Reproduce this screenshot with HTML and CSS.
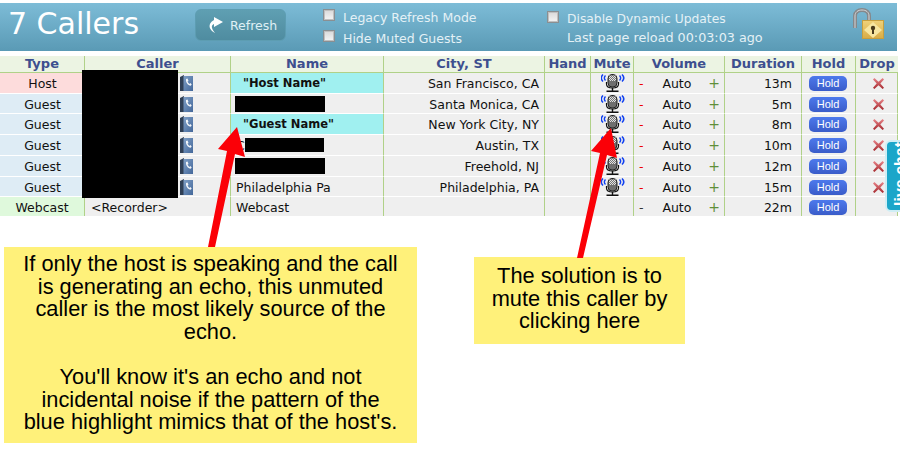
FILE: index.html
```html
<!DOCTYPE html>
<html>
<head>
<meta charset="utf-8">
<title>7 Callers</title>
<link rel="stylesheet" href="styles.css">
</head>
<body>
<div class="page">
  <header class="bar">
    <h1 class="title">7 Callers</h1>
    <div class="refresh">
      <svg class="refresh-ico" width="18" height="18" viewBox="0 0 18 18"><path d="M8 1L17 6 8 11V8C5 9 5 12 9 17 3 14 1 8 8 4Z" fill="#fff"/></svg>
      <span>Refresh</span>
    </div>
    <div class="opts">
      <label class="opt"><i class="box"></i>Legacy Refresh Mode</label>
      <label class="opt"><i class="box"></i>Hide Muted Guests</label>
    </div>
    <div class="opts opts-b">
      <label class="opt"><i class="box"></i>Disable Dynamic Updates</label>
      <div class="opt opt-plain">Last page reload 00:03:03 ago</div>
    </div>
    <svg class="lock" width="34" height="34" viewBox="0 0 34 34">
      <path d="M4 21V9c0-4 3-6 7-6s7 2 7 6v5" fill="none" stroke="#85888b" stroke-width="4"/>
      <path d="M4 21V9c0-4 3-6 7-6s7 2 7 6v5" fill="none" stroke="#d5d6d8" stroke-width="1"/>
      <rect x="11.500" y="13.500" width="21" height="18" fill="url(#lk)" stroke="#c79f3e"/>
      <path d="M22 15l9 8-9 8-9-8Z" fill="#f8e6a0"/>
      <circle cx="22" cy="21" r="2.200" fill="#4a3a1a"/><rect x="21" y="21" width="2" height="6" fill="#4a3a1a"/>
    </svg>
  </header>

  <table class="grid">
    <colgroup>
      <col class="c-type"><col class="c-caller"><col class="c-name"><col class="c-city"><col class="c-hand"><col class="c-mute"><col class="c-vol"><col class="c-dur"><col class="c-hold"><col class="c-drop">
    </colgroup>
    <thead>
      <tr><th>Type</th><th>Caller</th><th>Name</th><th>City, ST</th><th>Hand</th><th>Mute</th><th>Volume</th><th>Duration</th><th>Hold</th><th>Drop</th></tr>
    </thead>
    <tbody>
      <tr>
        <td class="type host">Host</td><td class="caller"><svg class="ph" viewBox="0 0 13 16"><use href="#phone"/></svg></td>
        <td class="name hl">"Host Name"</td><td class="city">San Francisco, CA</td><td></td>
        <td class="mute"><svg class="mic" viewBox="0 0 24 18"><use href="#mic"/></svg></td>
        <td><div class="vol"><b class="minus">-</b><span>Auto</span><b class="plus">+</b></div></td>
        <td class="dur">13m</td><td class="hold"><span class="btn">Hold</span></td><td class="drop"><svg class="x" viewBox="0 0 12 12"><use href="#x"/></svg></td>
      </tr>
      <tr class="short">
        <td class="type">Guest</td><td class="caller"><svg class="ph" viewBox="0 0 13 16"><use href="#phone"/></svg></td>
        <td class="name"><i class="black b-wide"></i></td><td class="city">Santa Monica, CA</td><td></td>
        <td class="mute"><svg class="mic" viewBox="0 0 24 18"><use href="#mic"/></svg></td>
        <td><div class="vol"><b class="minus">-</b><span>Auto</span><b class="plus">+</b></div></td>
        <td class="dur">5m</td><td class="hold"><span class="btn">Hold</span></td><td class="drop"><svg class="x" viewBox="0 0 12 12"><use href="#x"/></svg></td>
      </tr>
      <tr>
        <td class="type">Guest</td><td class="caller"><svg class="ph" viewBox="0 0 13 16"><use href="#phone"/></svg></td>
        <td class="name hl">"Guest Name"</td><td class="city">New York City, NY</td><td></td>
        <td class="mute"><svg class="mic" viewBox="0 0 24 18"><use href="#mic"/></svg></td>
        <td><div class="vol"><b class="minus">-</b><span>Auto</span><b class="plus">+</b></div></td>
        <td class="dur">8m</td><td class="hold"><span class="btn">Hold</span></td><td class="drop"><svg class="x" viewBox="0 0 12 12"><use href="#x"/></svg></td>
      </tr>
      <tr>
        <td class="type">Guest</td><td class="caller"><svg class="ph" viewBox="0 0 13 16"><use href="#phone"/></svg></td>
        <td class="name"><div class="partial">C<i class="black b-mid"></i></div></td><td class="city">Austin, TX</td><td></td>
        <td class="mute"><svg class="mic" viewBox="0 0 24 18"><use href="#mic"/></svg></td>
        <td><div class="vol"><b class="minus">-</b><span>Auto</span><b class="plus">+</b></div></td>
        <td class="dur">10m</td><td class="hold"><span class="btn">Hold</span></td><td class="drop"><svg class="x" viewBox="0 0 12 12"><use href="#x"/></svg></td>
      </tr>
      <tr>
        <td class="type">Guest</td><td class="caller"><svg class="ph" viewBox="0 0 13 16"><use href="#phone"/></svg></td>
        <td class="name"><i class="black b-wide"></i></td><td class="city">Freehold, NJ</td><td></td>
        <td class="mute"><svg class="mic" viewBox="0 0 24 18"><use href="#mic"/></svg></td>
        <td><div class="vol"><b class="minus">-</b><span>Auto</span><b class="plus">+</b></div></td>
        <td class="dur">12m</td><td class="hold"><span class="btn">Hold</span></td><td class="drop"><svg class="x" viewBox="0 0 12 12"><use href="#x"/></svg></td>
      </tr>
      <tr class="short">
        <td class="type">Guest</td><td class="caller"><svg class="ph" viewBox="0 0 13 16"><use href="#phone"/></svg></td>
        <td class="name">Philadelphia Pa</td><td class="city">Philadelphia, PA</td><td></td>
        <td class="mute"><svg class="mic" viewBox="0 0 24 18"><use href="#mic"/></svg></td>
        <td><div class="vol"><b class="minus">-</b><span>Auto</span><b class="plus">+</b></div></td>
        <td class="dur">15m</td><td class="hold"><span class="btn">Hold</span></td><td class="drop"><svg class="x" viewBox="0 0 12 12"><use href="#x"/></svg></td>
      </tr>
      <tr class="last">
        <td class="type web">Webcast</td><td class="caller rec">&lt;Recorder&gt;</td>
        <td class="name">Webcast</td><td class="city"></td><td></td>
        <td class="mute"></td>
        <td><div class="vol"><b class="dash">-</b><span>Auto</span><b class="plus">+</b></div></td>
        <td class="dur">22m</td><td class="hold"><span class="btn">Hold</span></td><td class="drop"></td>
      </tr>
    </tbody>
  </table>

  <div class="redact"></div>
  <div class="chat"><span>live chat</span></div>

  <aside class="note note-l">
    <p>If only the host is speaking and the call is generating an echo, this unmuted caller is the most likely source of the echo.</p>
    <p>You'll know it's an echo and not incidental noise if the pattern of the blue highlight mimics that of the host's.</p>
  </aside>
  <aside class="note note-r">
    <p>The solution is to mute this caller by clicking here</p>
  </aside>

  <svg class="arrows" width="900" height="456" viewBox="0 0 900 456">
    <path d="M208 247L227 151 218 149 237 127 245 157 235 154 215 247Z" fill="#fb0007"/>
    <path d="M577 258L600 153 591 151 611 128 617 158 607 155 583 258Z" fill="#fb0007"/>
  </svg>
</div>

<svg class="defs" width="0" height="0">
  <defs>
    <linearGradient id="lk" x1="0" x2="0" y1="0" y2="1"><stop offset="0" stop-color="#f0d27a"/><stop offset="1" stop-color="#d9ac45"/></linearGradient>
    <linearGradient id="pg" x1="0" x2="1" y1="0" y2="1"><stop offset="0" stop-color="#7f9fc6"/><stop offset="1" stop-color="#44689a"/></linearGradient>
    <linearGradient id="xg" x1="0" x2="0" y1="0" y2="1"><stop offset="0" stop-color="#e8858a"/><stop offset="1" stop-color="#a5282e"/></linearGradient>
    <pattern id="chk" width="2" height="2" patternUnits="userSpaceOnUse"><rect width="2" height="2" fill="#e2e2e2"/><rect width="1" height="1" fill="#777"/><rect x="1" y="1" width="1" height="1" fill="#777"/></pattern>
    <symbol id="phone" viewBox="0 0 13 16">
      <path d="M0 2L4 0V16H0Z" fill="#2f3f55"/>
      <rect x="3.500" y="1" width="9.500" height="15" fill="url(#pg)"/>
      <path d="M6 4l1.500-.5 1 2.500-1 .6c.3 1 1 1.800 2 2.300l.9-.8 1.300 1.500-1 1.200C8 10.500 5.500 7.500 6 4Z" fill="#f2f5f9"/>
    </symbol>
    <symbol id="mic" viewBox="0 0 24 18">
      <path d="M4.500 1.500C3 3 3 5 4.500 6.500M2 .5C-.5 3 -.5 5 2 7.500M18.500 1.500C20 3 20 5 18.500 6.500M21 .5C23.500 3 23.500 5 21 7.500" fill="none" stroke="#1040f0" stroke-width="1.500"/>
      <rect x="7" y=".5" width="9" height="12.500" rx="4" fill="#6f6f6f" stroke="#222"/>
      <path d="M8 1.500h7V7H8Z" fill="url(#chk)"/>
      <path d="M5.500 8v2c0 2.500 2.500 4 6 4s6-1.500 6-4V8" fill="none" stroke="#111" stroke-width="1.200"/>
      <path d="M11.500 14v3M5.500 17.300h12" stroke="#111" stroke-width="1.400"/>
    </symbol>
    <symbol id="x" viewBox="0 0 12 12">
      <path d="M1.500 0L6 4 10.500 0 12 1.500 8 6l4 4.500-1.500 1.500L6 8l-4.500 4L0 10.500 4 6 0 1.500Z" fill="url(#xg)"/>
    </symbol>
  </defs>
</svg>
</body>
</html>
```

FILE: styles.css
```css
* { box-sizing: border-box; }
html, body { margin: 0; padding: 0; background: #fff; }
body { font-family: "DejaVu Sans", Verdana, sans-serif; overflow: hidden; }
.page { position: relative; width: 900px; height: 456px; padding-top: 3px; overflow: hidden; }
.defs { position: absolute; }

.bar { display: flex; align-items: flex-start; width: 897px; height: 48px; background: linear-gradient(#7dbcd7, #5a9ab5); color: #fff; }
.title { margin: 0; padding: 5px 0 0 8px; width: 195px; font-size: 30px; line-height: 32px; font-weight: 400; }
.refresh { display: flex; align-items: center; gap: 6px; margin-top: 6px; width: 91px; height: 32px; padding-left: 10px; border-radius: 6px; border: 1px solid #5d9db2; background: linear-gradient(#5f9fb2, #4f8ca0); color: #dff0f5; font-size: 12.500px; }
.refresh-ico { flex: none; }
.opts { display: flex; flex-direction: column; gap: 3px; margin: 5px 0 0 37px; width: 224px; font-size: 12.500px; color: #e4f1f6; }
.opts-b { margin: 7px 0 0 0; width: 300px; gap: 0; font-size: 12.300px; }
.opt { display: flex; align-items: center; height: 18px; }
.opt-plain { padding-left: 20px; font-size: 12.750px; }
.box { flex: none; width: 12px; height: 12px; margin-right: 8px; margin-top: -4px; border: 1px solid #8a8f92; background: linear-gradient(#d9d9d9, #f5f5f5); box-shadow: inset 0 0 0 1px #c0c0c0; }
.lock { position: absolute; left: 851px; top: 7px; }

.grid { table-layout: fixed; border-collapse: separate; border-spacing: 0; width: 898px; margin-top: 5px; font-size: 12.500px; color: #111; }
.c-type { width: 85px; } .c-caller { width: 146px; } .c-name { width: 153px; } .c-city { width: 161px; } .c-hand { width: 46px; }
.c-mute { width: 43px; } .c-vol { width: 91px; } .c-dur { width: 77px; } .c-hold { width: 54px; } .c-drop { width: 42px; }
.grid th { height: 17px; padding: 0; background: #ecf4e3; color: #3d4f8f; font-size: 13px; line-height: 16px; font-weight: 700; text-align: center; border-right: 1px solid #b0d188; border-bottom: 1px solid #b0d188; }
.grid th:last-child { border-right: 0; }
.grid td { height: 21px; padding: 0; background: #efefef; text-align: center; border-right: 1px solid #b0d188; border-bottom: 1px solid #fff; white-space: nowrap; overflow: hidden; }
.grid .short td { height: 20px; padding-top: 1px; }
.grid .last td { height: 19px; border-bottom: 0; padding-top: 1px; }
.grid td.type { background: #deecf5; border-right: 0; }
.grid td.host { background: #fddcdc; }
.grid td.web { background: #dff9dc; border-right: 1px solid #b0d188; }
.grid td.caller { text-align: left; padding-left: 95px; }
.grid td.rec { padding-left: 6px; }
.grid td.name { text-align: left; padding-left: 5px; }
.grid td.hl { background: #a0f0f0; font-weight: 700; font-size: 11.500px; padding-left: 12px; }
.grid td.city { text-align: right; padding-right: 5px; }
.grid td.dur { text-align: right; padding-right: 9px; }
.ph { display: block; width: 13px; height: 16px; }
.mic { display: block; width: 24px; height: 18px; margin: 0 auto; transform: translateX(1px); }
.vol { display: flex; align-items: center; justify-content: space-between; padding: 0 4px 0 5px; }
.vol span { margin-left: 2px; }
.minus { color: #e00; font-weight: 400; }
.dash { color: #333; font-weight: 400; }
.plus { color: #5f8f3a; font-weight: 400; font-size: 14px; line-height: 15px; }
.btn { display: block; width: 38px; height: 15px; margin-left: 7px; border-radius: 5px; background: linear-gradient(#4d79ec, #3a5cc9); color: #fff; font-size: 11px; line-height: 15px; font-family: "Liberation Sans", sans-serif; }
.x { display: block; width: 11px; height: 11px; margin: 0 auto; transform: translateX(2px); }
.black { display: block; height: 16px; background: #000; }
.b-wide { width: 90px; margin-left: -1px; }
.partial { display: flex; align-items: center; }
.b-mid { width: 79px; height: 14px; }

.redact { position: absolute; left: 82px; top: 70px; width: 96px; height: 128px; background: #000; }
.chat { position: absolute; left: 885px; top: 140px; width: 30px; height: 72px; border: 2px solid #cfeef5; border-radius: 6px 0 0 6px; background: #1ba6c9; color: #fff; font-family: "Liberation Sans", Arial, sans-serif; font-size: 16px; font-weight: 700; overflow: hidden; }
.chat span { position: absolute; left: 3px; top: 64px; transform-origin: 0 0; transform: rotate(-90deg); white-space: nowrap; line-height: 22px; }

.note { position: absolute; background: #fff17a; color: #000; font-family: "Liberation Sans", Arial, sans-serif; font-size: 21.800px; line-height: 22.600px; text-align: center; }
.note p { margin: 0; }
.note-l { left: 4px; top: 247px; width: 413px; height: 196px; padding: 6px 14px 0; }
.note-l p + p { margin-top: 22.600px; }
.note-r { left: 474px; top: 257px; width: 211px; height: 87px; padding: 8px 12px 0; }
.arrows { position: absolute; left: 0; top: 0; pointer-events: none; }
```
